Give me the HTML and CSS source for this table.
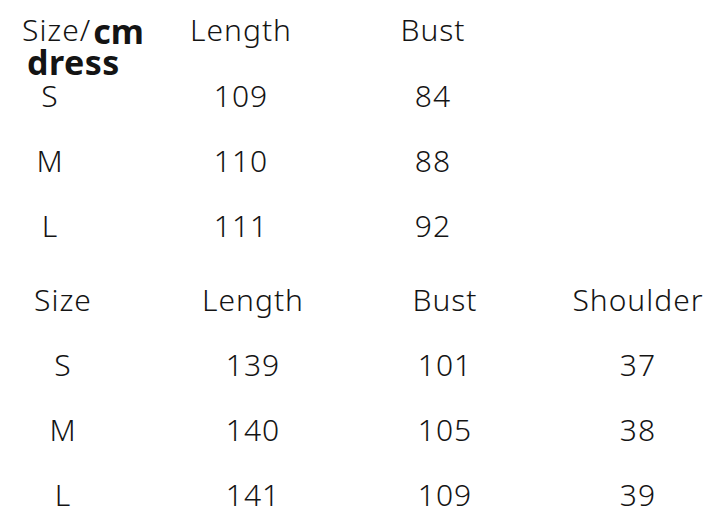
FILE: index.html
```html
<!DOCTYPE html>
<html>
<head>
<meta charset="utf-8">
<link rel="stylesheet" href="styles.css">
</head>
<body>
<section class="chart chart-dress">
  <div class="head size-head">
    <div class="size-line">Size/<b class="unit">cm</b></div>
    <div class="size-line dress">dress</div>
  </div>
  <div class="head">Length</div>
  <div class="head">Bust</div>

  <div class="cell">S</div><div class="cell">109</div><div class="cell">84</div>
  <div class="cell">M</div><div class="cell">110</div><div class="cell">88</div>
  <div class="cell">L</div><div class="cell">111</div><div class="cell">92</div>
</section>

<section class="chart chart-top">
  <div class="cell">Size</div><div class="cell">Length</div><div class="cell">Bust</div><div class="cell">Shoulder</div>
  <div class="cell">S</div><div class="cell">139</div><div class="cell">101</div><div class="cell">37</div>
  <div class="cell">M</div><div class="cell">140</div><div class="cell">105</div><div class="cell">38</div>
  <div class="cell">L</div><div class="cell">141</div><div class="cell">109</div><div class="cell">39</div>
</section>
</body>
</html>
```

FILE: styles.css
```css
html, body {
  margin: 0;
  padding: 0;
  background: #ffffff;
}

body {
  width: 713px;
  height: 531px;
  overflow: hidden;
  font-family: "Noto Sans", "Open Sans", sans-serif;
  font-weight: 300;
  font-size: 30px;
  letter-spacing: 1px;
  color: #141414;
}

.chart {
  display: grid;
  justify-items: center;
}

.chart-dress {
  grid-template-columns: 100px 282px 102px;
  grid-template-rows: 63px repeat(3, 65px);
  margin-bottom: 9px;
}

.chart-top {
  grid-template-columns: 120px 116px 124px 118px;
  grid-auto-rows: 65px;
  column-gap: 72px;
  margin-left: 3px;
}

.cell {
  line-height: 65px;
  white-space: nowrap;
}

.head {
  line-height: 40px;
  padding-top: 10px;
  white-space: nowrap;
}

.size-head {
  justify-self: start;
  padding-top: 14px;
  padding-left: 22px;
  display: flex;
  flex-direction: column;
}

.size-line {
  height: 32px;
  line-height: 32px;
}

.unit {
  font-weight: 700;
  font-size: 34px;
  letter-spacing: 0;
  margin-left: 2px;
  vertical-align: -3px;
}

.dress {
  font-weight: 700;
  font-size: 34px;
  letter-spacing: 0.5px;
  padding-left: 5px;
}
```
